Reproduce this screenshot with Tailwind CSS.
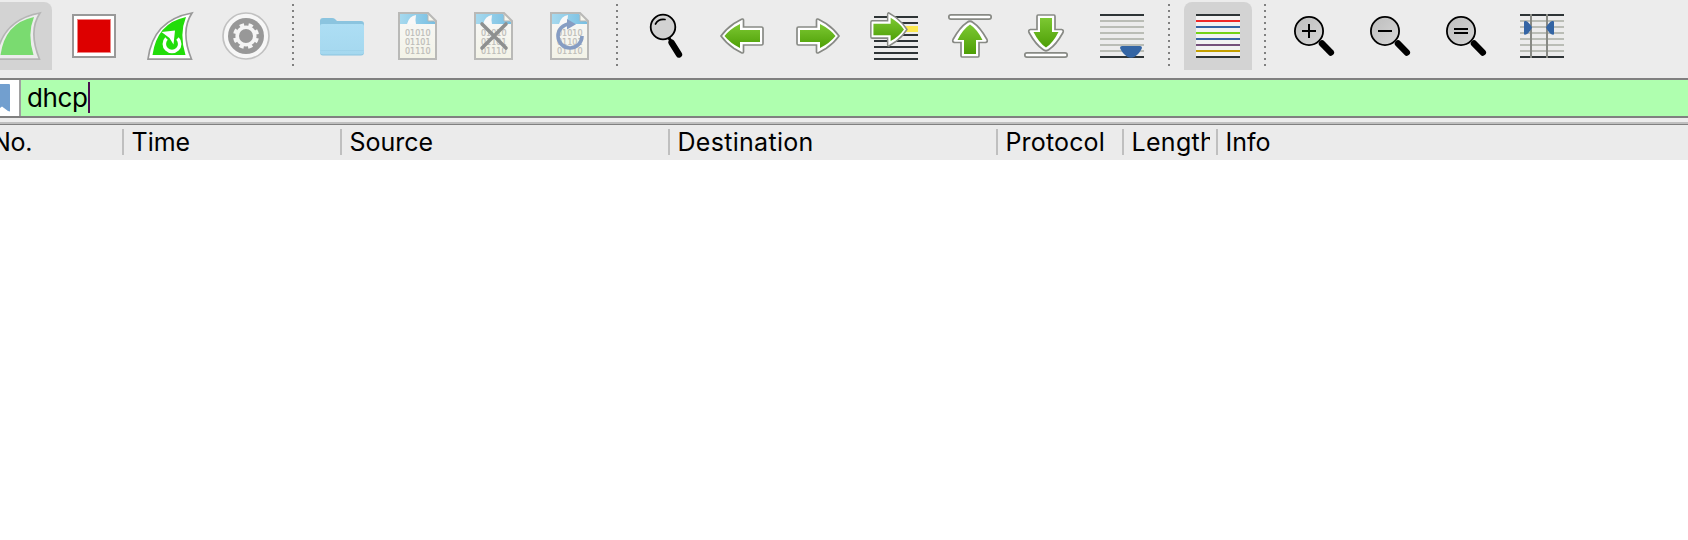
<!DOCTYPE html>
<html lang="en">
<head>
<meta charset="utf-8">
<title>Wireshark</title>
<script src="https://cdn.jsdelivr.net/npm/@tailwindcss/browser@4"></script>
</head>
<body class="w-[1688px] h-[540px] overflow-hidden bg-white text-black font-['Inter','Liberation_Sans',sans-serif]">
<svg width="0" height="0" class="absolute">
  <defs>
    <linearGradient id="green" x1="0" y1="0" x2="0" y2="1"><stop offset="0" stop-color="#7cc832"/><stop offset="1" stop-color="#4e9f06"/></linearGradient>
    <linearGradient id="sky" x1="0" y1="0" x2="1" y2="0"><stop offset="0" stop-color="#a6d9ee"/><stop offset="1" stop-color="#78bfe2"/></linearGradient>
    <linearGradient id="paper" x1="0" y1="0" x2="0" y2="1"><stop offset="0" stop-color="#f8f8f8"/><stop offset="1" stop-color="#f3f3e7"/></linearGradient>
    <linearGradient id="lens" x1="0" y1="0" x2="1" y2="1"><stop offset="0" stop-color="#bdbdbd"/><stop offset="1" stop-color="#d6d6d6"/></linearGradient>
    <linearGradient id="folder" x1="0" y1="0" x2="0" y2="1"><stop offset="0" stop-color="#addef4"/><stop offset="1" stop-color="#a5d8ef"/></linearGradient>
    <symbol id="doc" viewBox="0 0 40 48" overflow="visible">
      <path d="M1 1H30L38 9V47H1Z" fill="url(#paper)"/>
      <path d="M2 2H29L37 10V12H2Z" fill="url(#sky)"/>
      <path d="M9 12Q11 4 18 3Q17 8 18 12Z" fill="#f8f8f8"/>
      <path d="M30 1V9H38Z" fill="#f6f6ee" stroke="#b6b6b4" stroke-width="1"/>
      <path d="M1 1H30L38 9V47H1Z" fill="none" stroke="#b9b9b7" stroke-width="2"/>
      <g font-family="DejaVu Sans, sans-serif" font-size="8" fill="#bcbcb8" stroke="#bcbcb8" stroke-width=".2">
        <text x="7" y="24" textLength="25.500" lengthAdjust="spacingAndGlyphs">01010</text>
        <text x="7" y="33" textLength="25.500" lengthAdjust="spacingAndGlyphs">01101</text>
        <text x="7" y="42" textLength="25.500" lengthAdjust="spacingAndGlyphs">01110</text>
      </g>
    </symbol>
    <symbol id="arrow" viewBox="0 0 44 36" overflow="visible">
      <path d="M2.500 9H20.500V2Q21 .5 22.500 1.200L30 5.500Q38 11 43 18Q38 25 30 30.500L22.500 34.800Q21 35.500 20.500 34V27H2.500Q1 27 1 25.500V10.500Q1 9 2.500 9Z" fill="#fff" stroke="#888a85" stroke-width="1.700"/>
      <path d="M4 12H24V6Q34 11 39.500 18Q34 25 24 30V24H4Z" fill="url(#green)"/>
    </symbol>
    <symbol id="zoomlens" viewBox="0 0 44 44" overflow="visible">
      <path d="M28 27.500L36.800 36.500" stroke="#000" stroke-width="6.500" stroke-linecap="round"/>
      <circle cx="15" cy="15" r="14.100" fill="url(#lens)" stroke="#000" stroke-width="1.800"/>
    </symbol>
  </defs>
</svg>

<header class="flex h-[78px] items-start gap-2 bg-[#ececec] pt-0.5 -ml-4">
  <button class="h-[68px] w-[68px] shrink-0 rounded-t-lg bg-[#d3d3d3]"><svg viewBox="-16 2 68 68" class="size-[68px]">
    <path d="M-4 59.200Q1 20 40 13Q28 31 39.500 59.200Z" fill="#ececec" stroke="#b5b5b5" stroke-width="1.700"/><path d="M.5 55Q5 23 34 17Q27 34 33.500 55Z" fill="#7adb70"/></svg></button>
  <button class="h-[68px] w-[68px] shrink-0"><svg viewBox="60 2 68 68" class="size-[68px]">
    <path d="M73 15H115V57H73Z" fill="#fff" stroke="#999" stroke-width="2"/><path d="M77 19H111V53H77Z" fill="#f08080"/><path d="M78 20H110V52H78Z" fill="#d00"/></svg></button>
  <button class="h-[68px] w-[68px] shrink-0"><svg viewBox="136 2 68 68" class="size-[68px]">
    <path d="M148 59.200Q153 20 192 13Q180 31 191.500 59.200Z" fill="#fff" stroke="#999" stroke-width="1.700"/><path d="M152.500 55Q157 23 186 17Q179 34 185.500 55Z" fill="#22dd0a"/>
    <path d="M166.500 38.500A7.700 7.700 0 1 0 177.500 38.500" fill="none" stroke="#fff" stroke-width="3.500"/><path d="M161.500 32L175 30.500L173.500 44.500L169.500 38Z" fill="#fff"/></svg></button>
  <button class="h-[68px] w-[68px] shrink-0"><svg viewBox="212 2 68 68" class="size-[68px]">
    <circle cx="246" cy="36" r="23" fill="#f7f7f7" stroke="#c1c1c1" stroke-width="1.700"/><circle cx="246" cy="36" r="18" fill="#989898"/>
    <circle cx="246" cy="36" r="11.500" fill="none" stroke="#f5f5f5" stroke-width="3" stroke-dasharray="4.500 4.532" stroke-dashoffset="-2.250"/><circle cx="246" cy="36" r="8.800" fill="none" stroke="#f5f5f5" stroke-width="3.600"/></svg></button>
  <div class="w-3 shrink-0 pl-1"><svg width="2" height="68" viewBox="0 2 2 68"><path d="M1 4V66" stroke="#808080" stroke-width="2" stroke-dasharray="2 4"/></svg></div>
  <button class="h-[68px] w-[68px] shrink-0"><svg viewBox="308 2 68 68" class="size-[68px]">
    <path d="M320 21Q320 18 323 18H332Q334 18 335 19L337 21H361Q364 21 364 24V52Q364 55.500 361 55.500H323Q320 55.500 320 52Z" fill="#8bc4df"/><path d="M320 26Q320 24 322 24H362Q364 24 364 26V52Q364 54.500 361 54.500H323Q320 54.500 320 52Z" fill="url(#folder)"/><path d="M320.500 50.500H363.500" stroke="#9bd0e8" stroke-width=".7"/></svg></button>
  <button class="h-[68px] w-[68px] shrink-0"><svg viewBox="384 2 68 68" class="size-[68px]"><use href="#doc" x="398" y="12" width="40" height="48"/></svg></button>
  <button class="h-[68px] w-[68px] shrink-0"><svg viewBox="460 2 68 68" class="size-[68px]"><use href="#doc" x="474" y="12" width="40" height="48"/><path d="M482 24L506 48M506 24L482 48" stroke="#8e9090" stroke-width="3.600" stroke-linecap="round"/></svg></button>
  <button class="h-[68px] w-[68px] shrink-0"><svg viewBox="536 2 68 68" class="size-[68px]"><use href="#doc" x="550" y="12" width="40" height="48"/><path d="M569.500 24A12 12 0 1 0 582 36" fill="none" stroke="#869dc3" stroke-width="3.600"/><path d="M567 19L576 24.300L567 29.500Z" fill="#869dc3"/></svg></button>
  <div class="w-3 shrink-0 pl-1"><svg width="2" height="68" viewBox="0 2 2 68"><path d="M1 4V66" stroke="#808080" stroke-width="2" stroke-dasharray="2 4"/></svg></div>
  <button class="h-[68px] w-[68px] shrink-0"><svg viewBox="632 2 68 68" class="size-[68px]">
    <path d="M669 38L672 43" stroke="#000" stroke-width="3"/><path d="M671.500 42.500L679 54.500" stroke="#000" stroke-width="6.300" stroke-linecap="round"/><circle cx="663" cy="27" r="12.300" fill="#d2d2d2" stroke="#000" stroke-width="1.800"/><path d="M655.500 24Q658.500 18.500 665 19.500" fill="none" stroke="#000" stroke-width="1.700" stroke-linecap="round"/></svg></button>
  <button class="h-[68px] w-[68px] shrink-0"><svg viewBox="708 2 68 68" class="size-[68px]"><use href="#arrow" x="0" y="0" width="44" height="36" transform="translate(764 18) scale(-1 1)"/></svg></button>
  <button class="h-[68px] w-[68px] shrink-0"><svg viewBox="784 2 68 68" class="size-[68px]"><use href="#arrow" x="796" y="18" width="44" height="36"/></svg></button>
  <button class="h-[68px] w-[68px] shrink-0"><svg viewBox="860 2 68 68" class="size-[68px]"><path d="M874 17H918M874 23H918M874 35H918M874 41H918M874 47H918M874 53H918M874 59H918" stroke="#2e3436" stroke-width="2"/><path d="M874 26H918V32H874Z" fill="#fce94f"/><use href="#arrow" transform="translate(870 12) scale(.86 .97)" width="44" height="36"/></svg></button>
  <button class="h-[68px] w-[68px] shrink-0"><svg viewBox="936 2 68 68" class="size-[68px]"><rect x="948.800" y="14.800" width="42.400" height="4.400" rx="2.200" fill="#fff" stroke="#888a85" stroke-width="1.700"/>
    <path d="M962 57Q961 57 961 55.500V42.500H954.500Q952 42 953 39.500Q960 27 967 22.500Q970 20 973 22.500Q980 27 987 39.500Q988 42 985.500 42.500H979V55.500Q979 57 978 57Z" fill="#fff" stroke="#888a85" stroke-width="1.700"/><path d="M964 54V40H957.500Q963 29 970 24.500Q977 29 982.500 40H976V54Z" fill="url(#green)"/></svg></button>
  <button class="h-[68px] w-[68px] shrink-0"><svg viewBox="1012 2 68 68" class="size-[68px]"><rect x="1024.800" y="52.800" width="42.400" height="4.400" rx="2.200" fill="#fff" stroke="#888a85" stroke-width="1.700"/>
    <path d="M1038 15Q1037 15 1037 16.500V29.500H1030.500Q1028 30 1029 32.500Q1036 45 1043 49.500Q1046 52 1049 49.500Q1056 45 1063 32.500Q1064 30 1061.500 29.500H1055V16.500Q1055 15 1054 15Z" fill="#fff" stroke="#888a85" stroke-width="1.700"/><path d="M1040 18V32H1033.500Q1039 43 1046 47.500Q1053 43 1058.500 32H1052V18Z" fill="url(#green)"/></svg></button>
  <button class="h-[68px] w-[68px] shrink-0"><svg viewBox="1088 2 68 68" class="size-[68px]"><path d="M1100 15H1144M1100 57H1144" stroke="#2e3436" stroke-width="2"/><path d="M1100 21H1144M1100 27H1144M1100 33H1144M1100 39H1144M1100 45H1144M1100 51H1144" stroke="#babdb6" stroke-width="2"/><path d="M1122 46H1140Q1142 46 1142 48Q1140 53 1135 56.500Q1131 59 1127 56.500Q1122 53 1120 48Q1120 46 1122 46Z" fill="#3465a4"/></svg></button>
  <div class="w-3 shrink-0 pl-1"><svg width="2" height="68" viewBox="0 2 2 68"><path d="M1 4V66" stroke="#808080" stroke-width="2" stroke-dasharray="2 4"/></svg></div>
  <button class="h-[68px] w-[68px] shrink-0 rounded-t-lg bg-[#d3d3d3]"><svg viewBox="1184 2 68 68" class="size-[68px]"><path d="M1196 14H1240V58H1196Z" fill="#f2f2f2"/><g stroke-width="2"><path d="M1196 15H1240M1196 57H1240" stroke="#2e3436"/><path d="M1196 21H1240" stroke="#ef2929"/><path d="M1196 27H1240M1196 39H1240" stroke="#3465a4"/><path d="M1196 33H1240" stroke="#73d216"/><path d="M1196 45H1240" stroke="#75507b"/><path d="M1196 51H1240" stroke="#c4a000"/></g></svg></button>
  <div class="w-3 shrink-0 pl-1"><svg width="2" height="68" viewBox="0 2 2 68"><path d="M1 4V66" stroke="#808080" stroke-width="2" stroke-dasharray="2 4"/></svg></div>
  <button class="h-[68px] w-[68px] shrink-0"><svg viewBox="1280 2 68 68" class="size-[68px]"><use href="#zoomlens" x="1294" y="16" width="44" height="44"/><path d="M1302 31H1316M1309 24V38" stroke="#000" stroke-width="2"/></svg></button>
  <button class="h-[68px] w-[68px] shrink-0"><svg viewBox="1356 2 68 68" class="size-[68px]"><use href="#zoomlens" x="1370" y="16" width="44" height="44"/><path d="M1378 31H1392" stroke="#000" stroke-width="2"/></svg></button>
  <button class="h-[68px] w-[68px] shrink-0"><svg viewBox="1432 2 68 68" class="size-[68px]"><use href="#zoomlens" x="1446" y="16" width="44" height="44"/><path d="M1454 29H1468M1454 33H1468" stroke="#000" stroke-width="2"/></svg></button>
  <button class="h-[68px] w-[68px] shrink-0"><svg viewBox="1508 2 68 68" class="size-[68px]"><path d="M1520 15H1564M1520 57H1564" stroke="#2e3436" stroke-width="2"/><path d="M1520 21H1564M1520 27H1564M1520 33H1564M1520 39H1564M1520 45H1564M1520 51H1564" stroke="#babdb6" stroke-width="2"/><path d="M1531 14V58M1547 14V58" stroke="#888a85" stroke-width="2"/><path d="M1524 22Q1524 20.500 1526 21Q1529 22 1532 27.500Q1529 33.500 1526 34.500Q1524 35 1524 34ZM1554 22Q1554 20.500 1552 21Q1549 22 1546 27.500Q1549 33.500 1552 34.500Q1554 35 1554 34Z" fill="#3465a4"/></svg></button>
</header>

<div class="flex h-10 border-y-2 border-[#808080] bg-[#afffaf]">
  <div class="h-full w-[21px] shrink-0 border-r-2 border-[#a0a0a0] bg-white"><svg width="19" height="36" viewBox="0 80 19 36"><path d="M0 84H9Q10 84 10 85V111.500L8 111L2 106.500L0 108Z" fill="#729fcf"/></svg></div>
  <div class="flex flex-1 items-start pl-1.5"><span class="text-[26px] leading-9 tracking-[-0.35px]">dhcp</span><span class="mt-0.5 h-[31px] w-0.5 bg-[#4b0f50]"></span></div>
</div>
<div class="h-1 bg-[#ececec]"></div>
<div class="h-[3px] border-t-2 border-[#bfbfbf] bg-[#808080]"></div>
<div class="flex h-[35px] items-start bg-[#ebebeb] pt-1 text-[25px] leading-[26px] whitespace-nowrap">
  <div class="flex h-[26px] w-[124px] shrink-0 overflow-hidden border-r-2 border-[#bfbfbf]"><span class="-ml-2 tracking-[-0.3px]">No.</span></div>
  <div class="h-[26px] w-[218px] shrink-0 border-r-2 border-[#bfbfbf] pl-[7.500px]">Time</div>
  <div class="h-[26px] w-[328px] shrink-0 border-r-2 border-[#bfbfbf] pl-[7.500px]">Source</div>
  <div class="h-[26px] w-[328px] shrink-0 border-r-2 border-[#bfbfbf] pl-[7.500px] tracking-[0.3px]">Destination</div>
  <div class="h-[26px] w-[126px] shrink-0 border-r-2 border-[#bfbfbf] pl-[7.500px] tracking-[0.15px]">Protocol</div>
  <div class="h-[26px] w-[94px] shrink-0 border-r-2 border-[#bfbfbf] pl-[7.500px] pr-1.5"><div class="h-8 overflow-hidden tracking-[0.3px]">Length</div></div>
  <div class="h-[26px] pl-[7.500px]">Info</div>
</div>
<main class="h-[380px] bg-white"></main>
</body>
</html>
